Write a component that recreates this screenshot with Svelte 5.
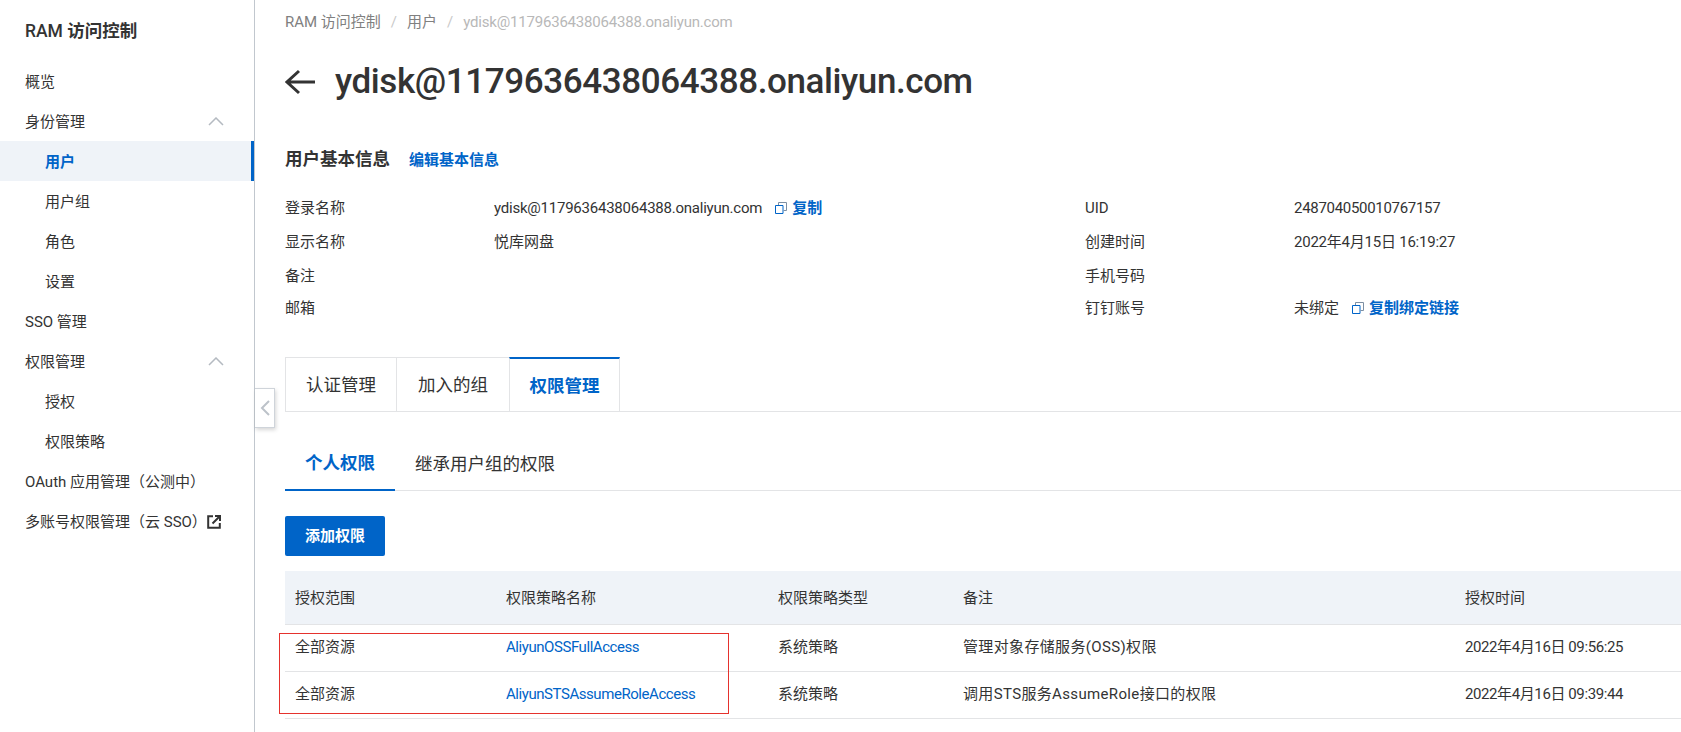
<script>
	const nav = [
		{ label: '概览' },
		{ label: '身份管理', open: true },
		{ label: '用户', sub: true, active: true },
		{ label: '用户组', sub: true },
		{ label: '角色', sub: true },
		{ label: '设置', sub: true },
		{ label: 'SSO 管理' },
		{ label: '权限管理', open: true },
		{ label: '授权', sub: true },
		{ label: '权限策略', sub: true },
		{ label: 'OAuth 应用管理（公测中）' },
		{ label: '多账号权限管理（云 SSO）', external: true }
	];

	const email = 'ydisk@1179636438064388.onaliyun.com';

	const rows = [
		{ scope: '全部资源', name: 'AliyunOSSFullAccess', type: '系统策略', note: '管理对象存储服务(OSS)权限', time: '2022年4月16日 09:56:25' },
		{ scope: '全部资源', name: 'AliyunSTSAssumeRoleAccess', type: '系统策略', note: '调用STS服务AssumeRole接口的权限', time: '2022年4月16日 09:39:44' }
	];
</script>

<div class="page">
	<aside class="sidebar">
		<h2 class="brand">RAM <b>访问控制</b></h2>
		<nav>
			{#each nav as item}
				<div class="item" class:sub={item.sub} class:active={item.active}>
					<span>{item.label}</span>
					{#if item.open}
						<svg class="chevron" width="16" height="9" viewBox="0 0 16 9"><path d="M1 8 L8 1 L15 8" fill="none" stroke="#b4bac1" stroke-width="1.5" /></svg>
					{/if}
					{#if item.external}
						<svg class="ext" width="14" height="14" viewBox="0 0 14 14"><path d="M6 1.2 H1.2 V12.8 H12.8 V8" fill="none" stroke="#333" stroke-width="2" /><path d="M5.5 8.5 L12 2 M8 1 H13 V6" fill="none" stroke="#333" stroke-width="2" /></svg>
					{/if}
				</div>
			{/each}
		</nav>
	</aside>

	<button class="collapse" aria-label="收起">
		<svg width="10" height="16" viewBox="0 0 10 16"><path d="M9 1 L2 8 L9 15" fill="none" stroke="#bcc2c9" stroke-width="2" /></svg>
	</button>

	<main class="main">
		<div class="crumbs">
			<span>RAM 访问控制</span><i>/</i><span>用户</span><i>/</i><span class="current">{email}</span>
		</div>

		<div class="title">
			<svg width="30" height="26" viewBox="0 0 30 26"><path d="M30 13 H2 M14 2 L2 13 L14 24" fill="none" stroke="#333" stroke-width="3" /></svg>
			<h1>{email}</h1>
		</div>

		<div class="section-head">
			<h3>用户基本信息</h3>
			<a href="#edit">编辑基本信息</a>
		</div>

		<div class="info">
			<div class="col">
				<div class="row r1">
					<label>登录名称</label>
					<div class="val"><span class="narrow">{email}</span><svg class="copy" width="12" height="12" viewBox="0 0 12 12"><path d="M0.5 3.5 H8 V11.5 H0.5 Z" fill="none" stroke="#0064c8" /><path d="M3.5 3 V0.5 H11.5 V8.5 H8.5" fill="none" stroke="#7d8fa3" /></svg><a href="#copy">复制</a></div>
				</div>
				<div class="row r2"><label>显示名称</label><div class="val">悦库网盘</div></div>
				<div class="row r3"><label>备注</label></div>
				<div class="row r4"><label>邮箱</label></div>
			</div>
			<div class="col">
				<div class="row r1"><label>UID</label><div class="val uid">248704050010767157</div></div>
				<div class="row r2"><label>创建时间</label><div class="val narrow">2022年4月15日 16:19:27</div></div>
				<div class="row r3"><label>手机号码</label></div>
				<div class="row r4">
					<label>钉钉账号</label>
					<div class="val">未绑定<svg class="copy" width="12" height="12" viewBox="0 0 12 12"><path d="M0.5 3.5 H8 V11.5 H0.5 Z" fill="none" stroke="#0064c8" /><path d="M3.5 3 V0.5 H11.5 V8.5 H8.5" fill="none" stroke="#7d8fa3" /></svg><a href="#bind">复制绑定链接</a></div>
				</div>
			</div>
		</div>

		<div class="tabs">
			<div class="tab">认证管理</div>
			<div class="tab">加入的组</div>
			<div class="tab on">权限管理</div>
		</div>

		<div class="subtabs">
			<div class="subtab on">个人权限</div>
			<div class="subtab">继承用户组的权限</div>
		</div>

		<button class="primary">添加权限</button>

		<div class="table-wrap">
			<table>
				<colgroup>
					<col style="width:211px" />
					<col style="width:272px" />
					<col style="width:185px" />
					<col style="width:502px" />
					<col />
				</colgroup>
				<thead>
					<tr><th>授权范围</th><th>权限策略名称</th><th>权限策略类型</th><th>备注</th><th>授权时间</th></tr>
				</thead>
				<tbody>
					{#each rows as row}
						<tr>
							<td>{row.scope}</td>
							<td><a class="plain" href="#policy">{row.name}</a></td>
							<td>{row.type}</td>
							<td class="note">{row.note}</td>
							<td class="time">{row.time}</td>
						</tr>
					{/each}
				</tbody>
			</table>
			<div class="mark"></div>
		</div>
	</main>
</div>

<style>
	:global(body) {
		margin: 0;
		background: #fff;
	}

	.page {
		display: flex;
		position: relative;
		height: 732px;
		overflow: hidden;
		color: #333;
		font-family: Roboto, 'Noto Sans CJK SC', sans-serif;
		font-size: 15px;
		line-height: 22px;
	}

	.sidebar {
		flex: none;
		width: 254px;
		border-right: 1px solid #c1c7ce;
	}

	.brand {
		margin: 0;
		padding: 0 0 0 25px;
		height: 61px;
		line-height: 63px;
		font-size: 17.5px;
		font-weight: 500;
	}

	.brand b {
		font-weight: 700;
	}

	.item {
		display: flex;
		align-items: center;
		justify-content: space-between;
		height: 40px;
		padding: 2px 25px 0;
		box-sizing: border-box;
	}

	.item.sub {
		padding-left: 45px;
	}

	.item.active {
		background: #eff3f8;
		border-right: 3px solid #0064c8;
		color: #0064c8;
		font-weight: 700;
	}

	.chevron {
		margin: 0 5px 2px 0;
	}

	.ext {
		margin-right: 8px;
	}

	.collapse {
		position: absolute;
		left: 255px;
		top: 388px;
		width: 20px;
		height: 40px;
		padding: 0;
		display: flex;
		align-items: center;
		justify-content: center;
		background: #fff;
		border: 1px solid #cfd4da;
		border-left: 0;
		box-shadow: 1px 2px 4px rgba(0, 0, 0, 0.16);
	}

	.main {
		flex: 1;
		min-width: 0;
		padding-left: 30px;
	}

	.crumbs {
		display: flex;
		align-items: center;
		height: 43px;
		color: #808080;
	}

	.crumbs i {
		margin: 0 10px;
		color: #c9c9c9;
		font-style: normal;
	}

	.current {
		color: #b8b8b8;
		letter-spacing: -0.2px;
	}

	.title {
		display: flex;
		align-items: center;
		gap: 20px;
		height: 78px;
	}

	.title h1 {
		margin: 0;
		font-size: 35px;
		line-height: 44px;
		font-weight: 500;
		letter-spacing: -0.4px;
		white-space: nowrap;
	}

	.section-head {
		display: flex;
		align-items: baseline;
		gap: 19px;
		margin-top: 20px;
		height: 36px;
		line-height: 36px;
	}

	.section-head h3 {
		margin: 0;
		font-size: 17.5px;
		font-weight: 700;
	}

	a {
		color: #0064c8;
		font-weight: 700;
		text-decoration: none;
	}

	a.plain {
		font-weight: 400;
		letter-spacing: -0.44px;
	}

	.narrow {
		letter-spacing: -0.23px;
	}

	.uid {
		letter-spacing: -0.3px;
	}

	.info {
		display: flex;
		margin-top: 14px;
	}

	.col {
		flex: none;
		width: 800px;
	}

	.row {
		display: flex;
		align-items: center;
		white-space: nowrap;
	}

	.r1 { height: 33px; }
	.r2 { height: 35px; }
	.r3 { height: 33px; }
	.r4 { height: 31px; }

	.row label {
		flex: none;
		width: 209px;
	}

	.copy {
		margin: 0 5px 0 13px;
		vertical-align: -1px;
	}

	.tabs {
		display: flex;
		margin-top: 34px;
		height: 55px;
		box-sizing: border-box;
		border-bottom: 1px solid #e3e4e6;
	}

	.tab {
		display: flex;
		align-items: center;
		justify-content: center;
		width: 111px;
		height: 55px;
		box-sizing: border-box;
		border: 1px solid #e3e4e6;
		border-right: 0;
		font-size: 17.5px;
	}

	.tab:nth-child(2) {
		width: 113px;
	}

	.tab.on {
		width: 111px;
		border-top: 2px solid #0064c8;
		border-right: 1px solid #e3e4e6;
		border-bottom: 0;
		color: #0064c8;
		font-weight: 700;
	}

	.subtabs {
		display: flex;
		margin-top: 24px;
		height: 55px;
		box-sizing: border-box;
		border-bottom: 1px solid #e3e4e6;
	}

	.subtab {
		display: flex;
		align-items: center;
		height: 55px;
		padding: 0 20px;
		box-sizing: border-box;
		font-size: 17.5px;
	}

	.subtab.on {
		border-bottom: 2px solid #0064c8;
		color: #0064c8;
		font-weight: 700;
	}

	.primary {
		display: block;
		margin-top: 25px;
		width: 100px;
		height: 40px;
		padding: 0;
		border: 0;
		border-radius: 2px;
		background: #0064c8;
		color: #fff;
		font: inherit;
		font-weight: 700;
	}

	.table-wrap {
		position: relative;
		margin-top: 15px;
	}

	table {
		width: 100%;
		table-layout: fixed;
		border-collapse: collapse;
	}

	th {
		height: 52px;
		padding: 1px 0 0 10px;
		background: #eff3f8;
		border-bottom: 1px solid #e3e4e6;
		font-weight: 400;
		text-align: left;
	}

	td {
		height: 47px;
		padding: 0 0 2px 10px;
		box-sizing: border-box;
		border-bottom: 1px solid #e3e4e6;
		white-space: nowrap;
	}

	.note {
		letter-spacing: 0.35px;
	}

	.time {
		letter-spacing: -0.4px;
	}

	.mark {
		position: absolute;
		left: -6px;
		top: 62px;
		width: 448px;
		height: 79px;
		border: 1px solid #e5322d;
	}
</style>
